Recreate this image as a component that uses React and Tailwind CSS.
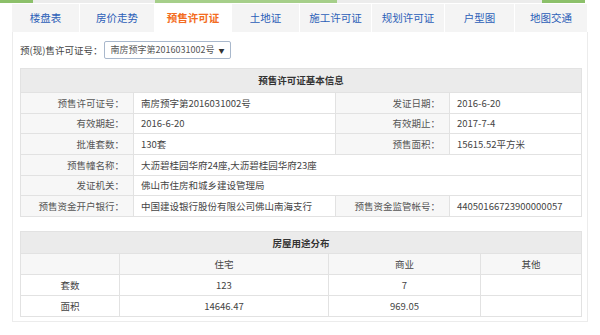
import React from "react";

const tabs = ["楼盘表", "房价走势", "预售许可证", "土地证", "施工许可证", "规划许可证", "户型图", "地图交通"];
const tabW = ["w-[68px]", "w-[75px]", "w-[77px]", "w-[68px]", "w-[72px]", "w-[73px]", "w-[70px]", "w-[73px]"];

const Label = ({ children }) => (
 <td className="bg-[#f7f7f7] border border-[#e2e2e2] text-right pr-[9px] text-[#555] whitespace-nowrap">{children}：</td>
);
const Val = ({ children, span }) => (
 <td colSpan={span} className="border border-[#e2e2e2] pl-[7px] text-[#444] whitespace-nowrap">{children}</td>
);

const App = () => {
 return (
  <div className="w-[600px] h-[335px] bg-white overflow-hidden text-[9.5px] font-['Noto_Sans_CJK_SC','Noto_Sans',sans-serif]">
   <div className="flex h-[3px]">
    <div className="w-[33px] bg-[#8cc06a]"></div>
    <div className="w-[122px] bg-[#ececec]"></div>
    <div className="w-[182px] bg-[#a6cf8a]"></div>
    <div className="w-[205px] bg-[#ececec]"></div>
    <div className="w-[43px] bg-[#8cc06a]"></div>
   </div>
   <div className="ml-[12px] w-[576px]">
    <div className="flex h-[28px] mt-[1px]">
     {tabs.map((t, i) => (
      <div
       key={t}
       className={
        "flex items-center justify-center border-r border-white text-[10.5px] " +
        tabW[i] +
        (i === 2 ? " bg-white text-[#f36c21] font-bold" : " bg-[#f4f4f4] text-[#2c5fb8]")
       }
      >
       {t}
      </div>
     ))}
    </div>
    <div className="bg-white border-l border-r border-b border-[#ececec] h-[290px] px-[7px]">
     <div className="flex items-center h-[36px] text-[#444]">
      <span>预(现)售许可证号：</span>
      <div className="ml-[2px] h-[18px] w-[127px] border border-[#a9b8cc] rounded-[2px] flex items-center pl-[5px] text-[9px] text-[#555] whitespace-nowrap">
       南房预字第2016031002号
       <span className="ml-[4px] text-[6px] text-[#333]">▼</span>
      </div>
     </div>
     <table className="w-[561px] border-collapse table-fixed">
      <colgroup>
       <col className="w-[113px]" />
       <col className="w-[202px]" />
       <col className="w-[114px]" />
       <col className="w-[132px]" />
      </colgroup>
      <tbody className="[&_tr]:h-[20.7px]">
       <tr className="!h-[24px]">
        <td colSpan={4} className="bg-[#ebebeb] border border-[#e2e2e2] text-center font-bold text-[#333]">预售许可证基本信息</td>
       </tr>
       <tr>
        <Label>预售许可证号</Label>
        <Val>南房预字第2016031002号</Val>
        <Label>发证日期</Label>
        <Val>2016-6-20</Val>
       </tr>
       <tr>
        <Label>有效期起</Label>
        <Val>2016-6-20</Val>
        <Label>有效期止</Label>
        <Val>2017-7-4</Val>
       </tr>
       <tr>
        <Label>批准套数</Label>
        <Val>130套</Val>
        <Label>预售面积</Label>
        <Val>15615.52平方米</Val>
       </tr>
       <tr>
        <Label>预售幢名称</Label>
        <Val span={3}>大沥碧桂园华府24座,大沥碧桂园华府23座</Val>
       </tr>
       <tr>
        <Label>发证机关</Label>
        <Val span={3}>佛山市住房和城乡建设管理局</Val>
       </tr>
       <tr>
        <Label>预售资金开户银行</Label>
        <Val>中国建设银行股份有限公司佛山南海支行</Val>
        <Label>预售资金监管帐号</Label>
        <Val>44050166723900000057</Val>
       </tr>
      </tbody>
     </table>
     <table className="w-[561px] border-collapse table-fixed mt-[14px] text-center text-[#444]">
      <colgroup>
       <col className="w-[99px]" />
       <col className="w-[209px]" />
       <col className="w-[152px]" />
       <col className="w-[101px]" />
      </colgroup>
      <tbody className="[&_td]:border [&_td]:border-[#e2e2e2] [&_tr]:h-[21px]">
       <tr className="!h-[22px]">
        <td colSpan={4} className="bg-[#ebebeb] font-bold text-[#333]">房屋用途分布</td>
       </tr>
       <tr className="bg-[#f7f7f7]">
        <td></td>
        <td>住宅</td>
        <td>商业</td>
        <td>其他</td>
       </tr>
       <tr>
        <td>套数</td>
        <td>123</td>
        <td>7</td>
        <td></td>
       </tr>
       <tr>
        <td>面积</td>
        <td>14646.47</td>
        <td>969.05</td>
        <td></td>
       </tr>
      </tbody>
     </table>
    </div>
   </div>
  </div>
 );
};

export default App;
